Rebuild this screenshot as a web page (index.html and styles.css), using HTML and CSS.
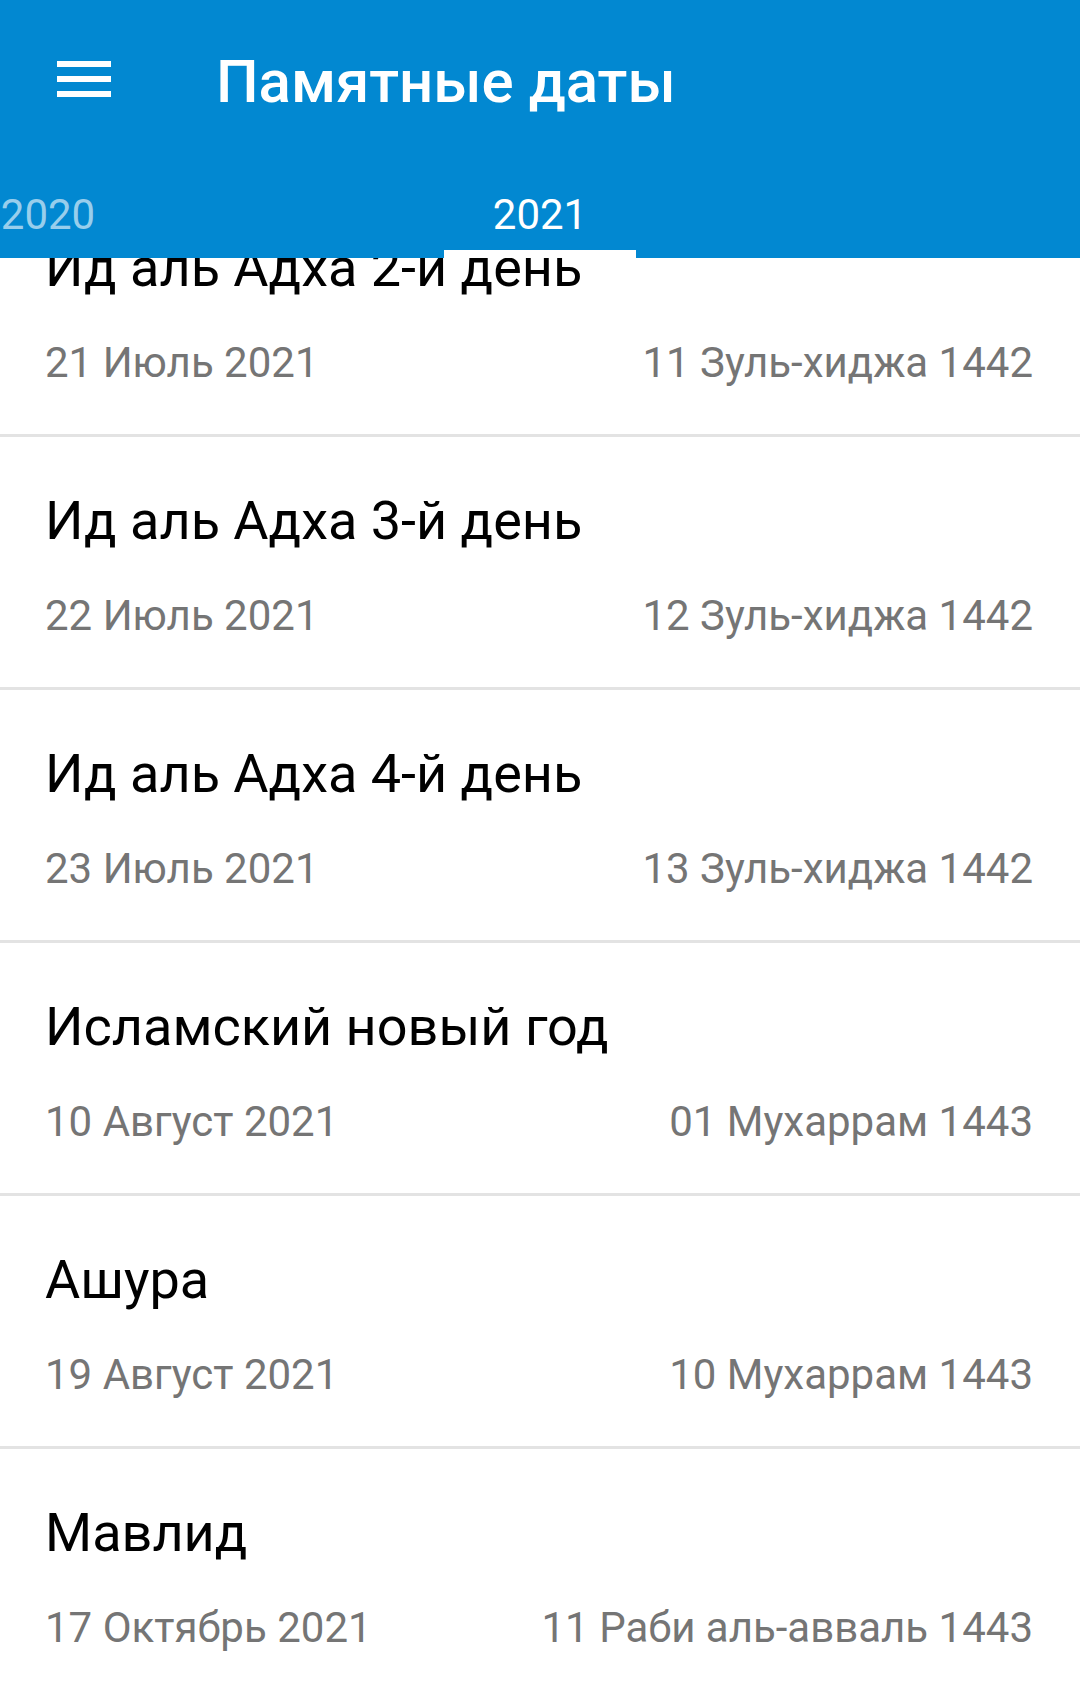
FILE: index.html
```html
<!DOCTYPE html>
<html lang="ru">
<head>
<meta charset="utf-8">
<title>Памятные даты</title>
<link rel="stylesheet" href="styles.css">
</head>
<body>
<div class="app">
  <header class="appbar">
    <div class="toolbar">
      <button class="menu-btn" aria-label="Меню">
        <svg width="54" height="36" viewBox="0 0 54 36" aria-hidden="true">
          <rect x="0" y="0" width="54" height="6" fill="#fff"/>
          <rect x="0" y="15" width="54" height="6" fill="#fff"/>
          <rect x="0" y="30" width="54" height="6" fill="#fff"/>
        </svg>
      </button>
      <h1 class="title">Памятные даты</h1>
    </div>
    <nav class="tabs">
      <div class="tab">2020</div>
      <div class="tab tab-active">2021</div>
    </nav>
  </header>
  <main class="viewport">
    <ul class="list">
      <li class="item">
        <div class="item-title">Ид аль Адха 2-й день</div>
        <div class="item-dates"><span>21 Июль 2021</span><span>11 Зуль-хиджа 1442</span></div>
      </li>
      <li class="item">
        <div class="item-title">Ид аль Адха 3-й день</div>
        <div class="item-dates"><span>22 Июль 2021</span><span>12 Зуль-хиджа 1442</span></div>
      </li>
      <li class="item">
        <div class="item-title">Ид аль Адха 4-й день</div>
        <div class="item-dates"><span>23 Июль 2021</span><span>13 Зуль-хиджа 1442</span></div>
      </li>
      <li class="item">
        <div class="item-title">Исламский новый год</div>
        <div class="item-dates"><span>10 Август 2021</span><span>01 Мухаррам 1443</span></div>
      </li>
      <li class="item">
        <div class="item-title">Ашура</div>
        <div class="item-dates"><span>19 Август 2021</span><span>10 Мухаррам 1443</span></div>
      </li>
      <li class="item">
        <div class="item-title">Мавлид</div>
        <div class="item-dates"><span>17 Октябрь 2021</span><span>11 Раби аль-авваль 1443</span></div>
      </li>
    </ul>
  </main>
</div>
</body>
</html>
```
FILE: styles.css
```css
* { box-sizing: border-box; }
html, body {
  margin: 0;
  padding: 0;
  background: #ffffff;
  font-family: Roboto, "Noto Sans", "Liberation Sans", sans-serif;
}
.app {
  width: 1080px;
  height: 1699px;
  display: flex;
  flex-direction: column;
  overflow: hidden;
}
.appbar {
  background: #0288d1;
  color: #fff;
  height: 258px;
  flex: none;
  display: flex;
  flex-direction: column;
}
.toolbar {
  display: flex;
  align-items: center;
  height: 158px;
  padding: 0 0 0 57px;
}
.menu-btn {
  background: none;
  border: 0;
  padding: 0;
  width: 54px;
  height: 36px;
  display: block;
}
.menu-btn svg { display: block; }
.title {
  margin: 5px 0 0 105px;
  font-size: 60px;
  font-weight: 500;
  line-height: 70px;
  color: #fff;
}
.tabs {
  display: flex;
  height: 100px;
  margin-left: -48px;
  gap: 300px;
}
.tab {
  width: 192px;
  display: flex;
  align-items: center;
  justify-content: center;
  font-size: 42px;
  font-weight: 400;
  color: rgba(255, 255, 255, 0.6);
  padding-top: 20px;
  border-bottom: 8px solid transparent;
}
.tab-active {
  color: #fff;
  border-bottom-color: #fff;
}
.viewport {
  flex: 1;
  overflow: hidden;
}
.list {
  list-style: none;
  margin: -74px 0 0 0;
  padding: 0;
}
.item {
  height: 253px;
  padding: 54px 47px 0 45px;
  border-bottom: 3px solid #e3e3e3;
}
.item-title {
  font-size: 54px;
  line-height: 60px;
  color: #000;
}
.item-dates {
  margin-top: 40px;
  display: flex;
  justify-content: space-between;
  font-size: 42px;
  line-height: 50px;
  color: #757575;
}
```
